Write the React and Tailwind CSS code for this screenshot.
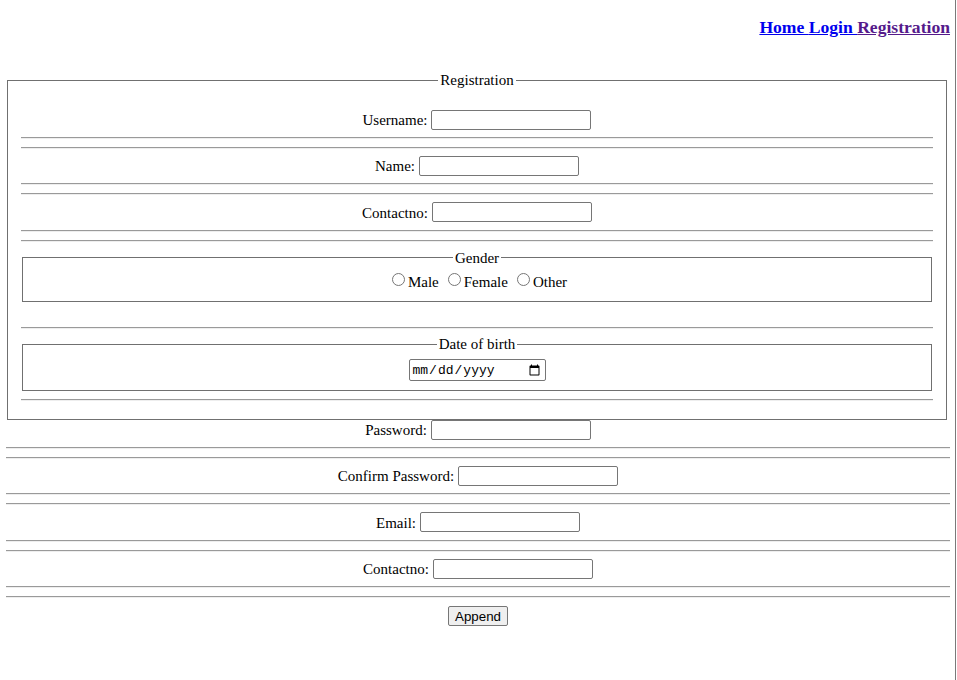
import React from "react";

const Rule = () => (
  <hr className="my-2 h-0 border-t border-b border-t-[#9a9a9a] border-b-[#eeeeee]" />
);

const TextRow = ({ label, type = "text" }) => (
  <div className="flex h-[18.4px] items-center justify-center gap-[4px]">
    <label className="pt-[1px]">{label}:</label>
    <input
      type={type}
      className="h-[20px] w-[160px] rounded-[2px] border border-[#767676] bg-white px-[2px] font-['Liberation_Sans',sans-serif] text-[13.33px]"
    />
  </div>
);

const Radio = ({ label }) => (
  <label className="flex items-center">
    <input type="radio" name="gender" className="mr-[3px] ml-[5px] mt-[-4px] h-[13px] w-[13px]" />
    {label}
  </label>
);

export default function App() {
  return (
    <div className="min-h-[680px] w-[956px] border-r border-[#7a7a7a] bg-white font-['Liberation_Serif',serif] text-[15px] text-black">
      {/* Top navigation */}
      <div className="h-[71px] pt-[17px] pr-[5px] text-right">
        <h3 className="text-[17.6px] font-bold leading-[21.5px]">
          <a href="#" className="text-[#0000ee] underline">
            {"Home "}
          </a>
          <a href="#" className="text-[#0000ee] underline">
            {"Login "}
          </a>
          <a href="#" className="text-[#551a8b] underline">
            Registration
          </a>
        </h3>
      </div>

      <form className="ml-[6px] w-[944px]">
        <fieldset className="ml-[1px] mr-[3px] border border-[#707070] px-[13px] pb-[10px]">
          <legend className="mx-auto px-[2px] leading-[18.4px]">Registration</legend>
          <div className="h-[21px]" />
          <TextRow label="Username" />
          <Rule />
          <Rule />
          <TextRow label="Name" />
          <Rule />
          <Rule />
          <TextRow label="Contactno" />
          <Rule />
          <Rule />

          <fieldset className="mx-[1px] mt-[-1px] border border-[#707070] px-[12px] pt-[5.6px] pb-[10px]">
            <legend className="mx-auto px-[2px] leading-[18.4px]">Gender</legend>
            <div className="flex h-[18.4px] items-center justify-center gap-[4px]">
              <Radio label="Male" />
              <Radio label="Female" />
              <Radio label="Other" />
            </div>
          </fieldset>
          <div className="h-[17.4px]" />
          <Rule />

          <fieldset className="mx-[1px] mt-[-2px] border border-[#707070] px-[12px] pt-[5.6px] pb-[9px]">
            <legend className="mx-auto px-[2px] leading-[18.4px]">Date of birth</legend>
            <div className="flex justify-center">
              <input
                type="date"
                className="h-[22px] w-[137px] rounded-[2px] border border-[#767676] bg-white px-[2px] font-['Liberation_Mono',monospace] text-[13px]"
              />
            </div>
          </fieldset>
          <Rule />
        </fieldset>

        <TextRow label="Password" type="password" />
        <Rule />
        <Rule />
        <TextRow label="Confirm Password" type="password" />
        <Rule />
        <Rule />
        <TextRow label="Email" type="email" />
        <Rule />
        <Rule />
        <TextRow label="Contactno" />
        <Rule />
        <Rule />
        <div className="flex justify-center">
          <button
            type="button"
            className="h-[20px] w-[60px] rounded-[2px] border border-[#767676] bg-[#efefef] font-['Liberation_Sans',sans-serif] text-[13.33px]"
          >
            Append
          </button>
        </div>
      </form>
    </div>
  );
}
